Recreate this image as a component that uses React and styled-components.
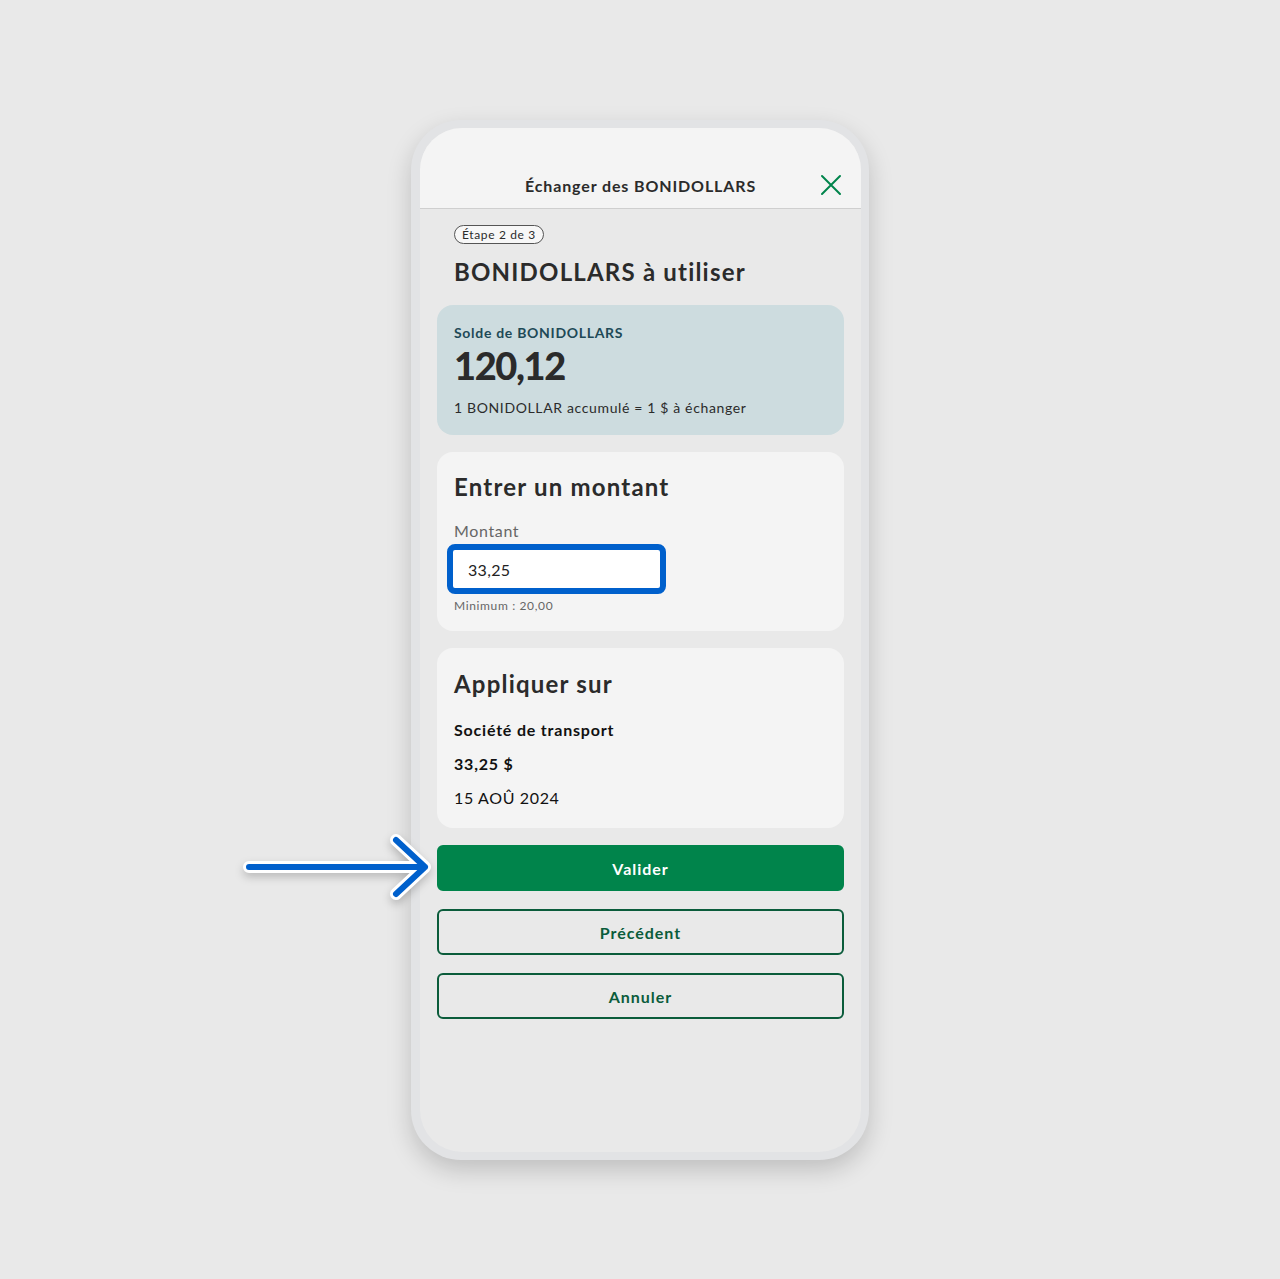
import React from 'react';
import styled, { createGlobalStyle } from 'styled-components';

const colors = {
  page: '#e9e9e9',
  frame: '#e2e3e5',
  surface: '#f4f4f4',
  text: '#2b2b2b',
  muted: '#666666',
  teal: '#1e4a57',
  balance: '#cddcdf',
  green: '#00844b',
  greenDark: '#0b5c3b',
  focus: '#0060cc',
};

const GlobalStyle = createGlobalStyle`
  html, body {
    margin: 0;
    padding: 0;
    background: ${colors.page};
  }
  body {
    font-family: Lato, "Open Sans", "Liberation Sans", sans-serif;
    color: ${colors.text};
    letter-spacing: 0.04em;
  }
  * { box-sizing: border-box; }
`;

const Page = styled.div`
  width: 1280px;
  height: 1279px;
  display: flex;
  justify-content: center;
  padding-top: 120px;
`;

const Phone = styled.div`
  position: relative;
  width: 458px;
  height: 1040px;
  padding: 8px 8px 8px 9px;
  border-radius: 50px;
  background: ${colors.frame};
  box-shadow: 0 10px 24px rgba(0, 0, 0, 0.18);
`;

const Screen = styled.div`
  height: 100%;
  border-radius: 42px;
  background: ${colors.page};
  overflow: hidden;
  display: flex;
  flex-direction: column;
`;

const Header = styled.header`
  height: 81px;
  flex-shrink: 0;
  background: ${colors.surface};
  border-bottom: 1px solid #cfcfcf;
  display: flex;
  align-items: flex-end;
  justify-content: center;
  padding-bottom: 13px;
  position: relative;
`;

const HeaderTitle = styled.h1`
  margin: 0;
  font-size: 16px;
  font-weight: 700;
  color: ${colors.text};
  letter-spacing: 0.055em;
`;

const CloseButton = styled.button`
  position: absolute;
  right: 18px;
  bottom: 11px;
  width: 24px;
  height: 24px;
  padding: 0;
  border: none;
  background: none;
  display: flex;
  align-items: center;
  justify-content: center;
`;

const Body = styled.main`
  padding: 16px 17px 0;
  display: flex;
  flex-direction: column;
`;

const StepBadge = styled.span`
  align-self: flex-start;
  margin-left: 17px;
  padding: 2px 7px 2px;
  border: 1px solid #555;
  border-radius: 10px;
  font-size: 12px;
  line-height: 13px;
  color: ${colors.text};
  background: #f7f7f7;
`;

const PageTitle = styled.h2`
  margin: 13px 0 18px 17px;
  font-size: 24px;
  line-height: 30px;
  font-weight: 700;
  letter-spacing: 0.05em;
`;

const Card = styled.section`
  background: ${({ $tone }) => ($tone === 'balance' ? colors.balance : colors.surface)};
  border-radius: 16px;
  padding: ${({ $pad }) => $pad};
  margin-bottom: 17px;
  display: flex;
  flex-direction: column;
`;

const BalanceLabel = styled.div`
  font-size: 14px;
  font-weight: 700;
  color: ${colors.teal};
  line-height: 18px;
  letter-spacing: 0.05em;
`;

const BalanceValue = styled.div`
  font-size: 38px;
  font-weight: 900;
  line-height: 42px;
  margin: 2px 0 13px;
  letter-spacing: -1.4px;
`;

const Note = styled.div`
  font-size: 14px;
  line-height: 18px;
`;

const CardTitle = styled.h3`
  margin: 0 0 ${({ $gap }) => $gap}px;
  font-size: 24px;
  line-height: 30px;
  font-weight: 700;
  letter-spacing: 0.05em;
`;

const FieldLabel = styled.label`
  font-size: 16px;
  color: ${colors.muted};
  line-height: 20px;
  margin-bottom: 3px;
`;

const InputRing = styled.div`
  width: 219px;
  height: 50px;
  margin-left: -7px;
  border: 6px solid ${colors.focus};
  border-radius: 8px;
  background: #fff;
  display: flex;
  align-items: center;
  padding-left: 13px;
`;

const Input = styled.input`
  border: none;
  outline: none;
  background: transparent;
  font-family: inherit;
  font-size: 16px;
  letter-spacing: 0.02em;
  color: #222;
  width: 100%;
`;

const Hint = styled.div`
  font-size: 12px;
  color: ${colors.muted};
  margin-top: 4px;
  line-height: 15px;
`;

const DetailLine = styled.div`
  font-size: 16px;
  line-height: 20px;
  font-weight: ${({ $bold }) => ($bold ? 700 : 400)};
  letter-spacing: ${({ $bold }) => ($bold ? '0.05em' : '0.04em')};
  color: #111;
  & + & {
    margin-top: 14px;
  }
`;

const Actions = styled.div`
  display: flex;
  flex-direction: column;
  gap: 18px;
`;

const Button = styled.button`
  height: 46px;
  border-radius: 6px;
  font-family: inherit;
  font-size: 16px;
  font-weight: 700;
  letter-spacing: 0.06em;
  cursor: pointer;
  background: ${({ $primary }) => ($primary ? colors.green : 'transparent')};
  color: ${({ $primary }) => ($primary ? '#fff' : colors.greenDark)};
  border: 2px solid ${({ $primary }) => ($primary ? colors.green : colors.greenDark)};
`;

const Pointer = styled.svg`
  position: absolute;
  left: -168px;
  top: 712px;
  filter: drop-shadow(0 4px 4px rgba(0, 0, 0, 0.2));
`;

export default function App() {
  return (
    <>
      <GlobalStyle />
      <Page>
        <Phone>
          <Screen>
            <Header>
              <HeaderTitle>Échanger des BONIDOLLARS</HeaderTitle>
              <CloseButton aria-label="Fermer">
                <svg width="22" height="22" viewBox="0 0 22 22">
                  <path d="M2 2 L20 20 M20 2 L2 20" stroke={colors.green} strokeWidth="2" strokeLinecap="round" />
                </svg>
              </CloseButton>
            </Header>
            <Body>
              <StepBadge>Étape 2 de 3</StepBadge>
              <PageTitle>BONIDOLLARS à utiliser</PageTitle>

              <Card $tone="balance" $pad="19px 17px 18px">
                <BalanceLabel>Solde de BONIDOLLARS</BalanceLabel>
                <BalanceValue>120,12</BalanceValue>
                <Note>1 BONIDOLLAR accumulé = 1 $ à échanger</Note>
              </Card>

              <Card $pad="20px 17px 18px">
                <CardTitle $gap={19}>Entrer un montant</CardTitle>
                <FieldLabel>Montant</FieldLabel>
                <InputRing>
                  <Input defaultValue="33,25" />
                </InputRing>
                <Hint>Minimum : 20,00</Hint>
              </Card>

              <Card $pad="21px 17px 20px">
                <CardTitle $gap={21}>Appliquer sur</CardTitle>
                <DetailLine $bold>Société de transport</DetailLine>
                <DetailLine $bold>33,25 $</DetailLine>
                <DetailLine>15 AOÛ 2024</DetailLine>
              </Card>

              <Actions>
                <Button $primary>Valider</Button>
                <Button>Précédent</Button>
                <Button>Annuler</Button>
              </Actions>
            </Body>
          </Screen>
          <Pointer width="200" height="70" viewBox="0 0 200 70">
            <g fill="none" strokeLinecap="round" strokeLinejoin="round">
              <path d="M6 35 H182 M153 8 L182 35 L153 62" stroke="#fff" strokeWidth="12" />
              <path d="M6 35 H182 M153 8 L182 35 L153 62" stroke={colors.focus} strokeWidth="6" />
            </g>
          </Pointer>
        </Phone>
      </Page>
    </>
  );
}
